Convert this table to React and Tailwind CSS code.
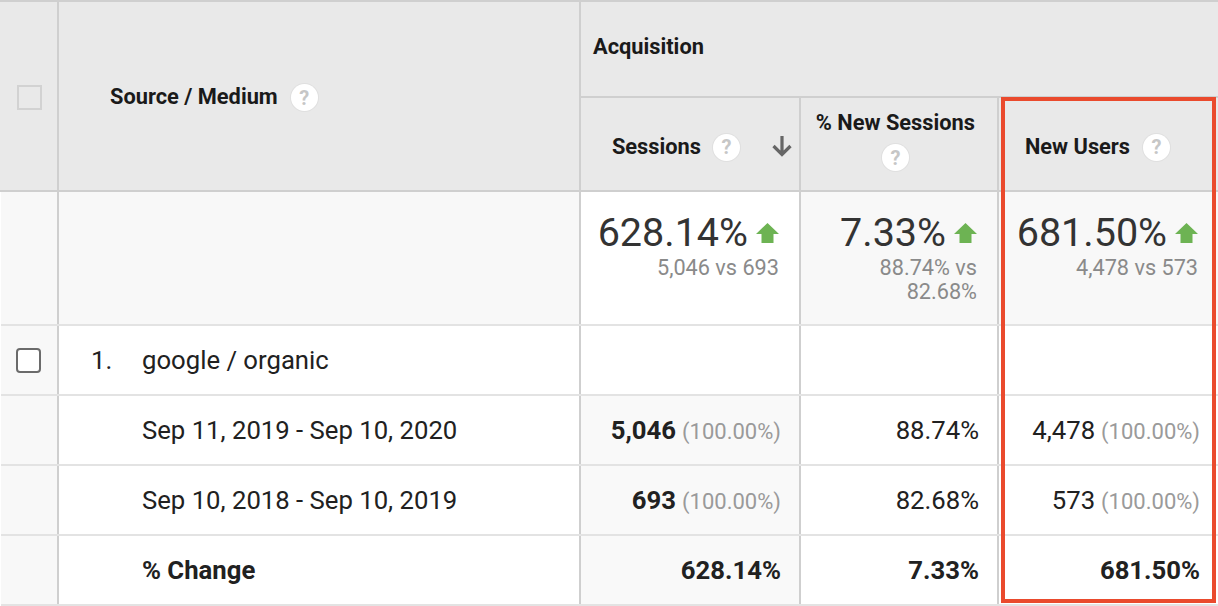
import React from "react";

const vline = "border-x-2 border-x-[#cfcfcf]";
const hline = "border-y-2 border-y-[#e3e3e3]";

function Help({ className = "" }) {
  return (
    <span
      className={`inline-flex h-[27px] w-[27px] shrink-0 items-center justify-center rounded-full bg-white text-[20px] font-bold leading-none text-[#c6c6c6] ring-1 ring-[#e0e0e0] ${className}`}
    >
      ?
    </span>
  );
}

function UpArrow() {
  return (
    <svg width="23" height="20" viewBox="0 0 23 20" className="shrink-0">
      <path d="M11.5 0 L23 11 H17.5 V20 H5.5 V11 H0 Z" fill="#6db353" />
    </svg>
  );
}

function SortArrow() {
  return (
    <svg width="22" height="22" viewBox="0 0 22 22" className="shrink-0">
      <path
        d="M11 1 V19 M2.5 11 L11 19.5 L19.5 11"
        fill="none"
        stroke="#666666"
        strokeWidth="3.2"
      />
    </svg>
  );
}

function Summary({ value, children, bg }) {
  return (
    <td className={`${vline} ${hline} ${bg} pr-[20px] pt-[19px] align-top`}>
      <div className="flex items-center justify-end gap-[8px]">
        <span className="text-[39.5px] leading-[44px] text-[#333]">{value}</span>
        <UpArrow />
      </div>
      <div className="ml-auto mt-[1px] max-w-[150px] text-right text-[21.7px] leading-[24px] text-[#8a8a8a]">
        {children}
      </div>
    </td>
  );
}

function Num({ value, pct, bold, bg = "bg-white" }) {
  return (
    <td className={`${vline} ${hline} ${bg} pr-[18px] text-right align-middle`}>
      <span className={`text-[25.7px] text-[#212121] ${bold ? "font-bold" : ""}`}>{value}</span>
      {pct ? <span className="ml-[6px] text-[22px] text-[#9a9a9a]">{pct}</span> : null}
    </td>
  );
}

const rows = [
  {
    label: "Sep 11, 2019 - Sep 10, 2020",
    sessions: "5,046",
    newSessions: "88.74%",
    newUsers: "4,478",
    pct: "(100.00%)",
  },
  {
    label: "Sep 10, 2018 - Sep 10, 2019",
    sessions: "693",
    newSessions: "82.68%",
    newUsers: "573",
    pct: "(100.00%)",
  },
];

export default function App() {
  return (
    <div className="relative h-[606px] w-[1218px] overflow-hidden bg-white font-['Roboto',sans-serif] text-[#212121]">
      <table className="w-[1218px] table-fixed border-collapse">
        <colgroup>
          <col className="w-[57px]" />
          <col className="w-[522px]" />
          <col className="w-[220px]" />
          <col className="w-[198px]" />
          <col className="w-[221px]" />
        </colgroup>
        <thead>
          <tr className="h-[96px]">
            <th
              rowSpan={2}
              className="border-2 border-[#cfcfcf] border-l-[#e9e9e9] bg-[#e9e9e9] pt-[2px] align-middle"
            >
              <span className="mx-auto block h-[25px] w-[25px] border-2 border-[#d2d2d2]" />
            </th>
            <th
              rowSpan={2}
              className="border-2 border-[#cfcfcf] bg-[#e9e9e9] pl-[51px] pt-[3px] text-left align-middle"
            >
              <div className="flex items-center gap-[13px]">
                <span className="text-[21.8px] font-bold text-[#1a1a1a]">Source / Medium</span>
                <Help />
              </div>
            </th>
            <th
              colSpan={3}
              className="border-2 border-[#cfcfcf] bg-[#e9e9e9] pb-[4px] pl-[12px] text-left align-middle"
            >
              <span className="text-[21.8px] font-bold text-[#1a1a1a]">Acquisition</span>
            </th>
          </tr>
          <tr className="h-[94px]">
            <th className="border-2 border-[#cfcfcf] bg-[#e9e9e9] pr-[6px] pt-[6px] align-middle">
              <div className="flex items-center justify-end">
                <span className="text-[21.8px] font-bold text-[#1a1a1a]">Sessions</span>
                <Help className="ml-[12px]" />
                <span className="ml-[31px] mb-[2px]">
                  <SortArrow />
                </span>
              </div>
            </th>
            <th className="border-2 border-[#cfcfcf] bg-[#e9e9e9] pr-[22px] align-top pt-[12px]">
              <div className="flex flex-col items-end">
                <div className="flex flex-col items-center">
                  <span className="text-[21.8px] font-bold leading-[26px] text-[#1a1a1a]">% New Sessions</span>
                  <Help className="mt-[8px]" />
                </div>
              </div>
            </th>
            <th className="border-2 border-[#cfcfcf] bg-[#e9e9e9] pr-[48px] pt-[6px] align-middle">
              <div className="flex items-center justify-end">
                <span className="text-[21.8px] font-bold text-[#1a1a1a]">New Users</span>
                <Help className="ml-[13px]" />
              </div>
            </th>
          </tr>
        </thead>
        <tbody>
          <tr className="h-[134px]">
            <td className={`${hline} border-r-2 border-r-[#cfcfcf] border-l-[#f0f0f0] bg-[#f8f8f8]`} />
            <td className={`${vline} ${hline} bg-[#f8f8f8]`} />
            <Summary value="628.14%" bg="bg-white">
              5,046 vs 693
            </Summary>
            <Summary value="7.33%" bg="bg-[#f8f8f8]">
              88.74% vs 82.68%
            </Summary>
            <Summary value="681.50%" bg="bg-[#f8f8f8]">
              4,478 vs 573
            </Summary>
          </tr>
          <tr className="h-[70px]">
            <td className={`${hline} border-r-2 border-r-[#cfcfcf] bg-[#f8f8f8] align-middle`}>
              <span className="ml-[15px] block h-[25px] w-[25px] rounded-[4px] border-2 border-[#6b6b6b] bg-white" />
            </td>
            <td className={`${vline} ${hline} bg-white align-middle`}>
              <div className="flex text-[25.7px]">
                <span className="w-[83px] pl-[32px]">1.</span>
                <span>google / organic</span>
              </div>
            </td>
            <td className={`${vline} ${hline} bg-white`} />
            <td className={`${vline} ${hline} bg-white`} />
            <td className={`${vline} ${hline} bg-white`} />
          </tr>
          {rows.map((row) => (
            <tr key={row.label} className="h-[70px]">
              <td className={`${hline} border-r-2 border-r-[#cfcfcf] bg-[#f8f8f8]`} />
              <td className={`${vline} ${hline} bg-white pl-[83px] align-middle text-[25.7px]`}>
                {row.label}
              </td>
              <Num value={row.sessions} pct={row.pct} bold bg="bg-[#f9f9f9]" />
              <Num value={row.newSessions} />
              <Num value={row.newUsers} pct={row.pct} />
            </tr>
          ))}
          <tr className="h-[70px]">
            <td className={`${hline} border-r-2 border-r-[#cfcfcf] bg-[#f8f8f8]`} />
            <td className={`${vline} ${hline} bg-white pl-[83px] align-middle text-[25.7px] font-bold`}>
              % Change
            </td>
            <Num value="628.14%" bold bg="bg-[#f9f9f9]" />
            <Num value="7.33%" bold />
            <Num value="681.50%" bold />
          </tr>
        </tbody>
      </table>
      <div className="pointer-events-none absolute left-[1001px] top-[97px] h-[506px] w-[215px] border-4 border-[#ea4a2d]" />
    </div>
  );
}
